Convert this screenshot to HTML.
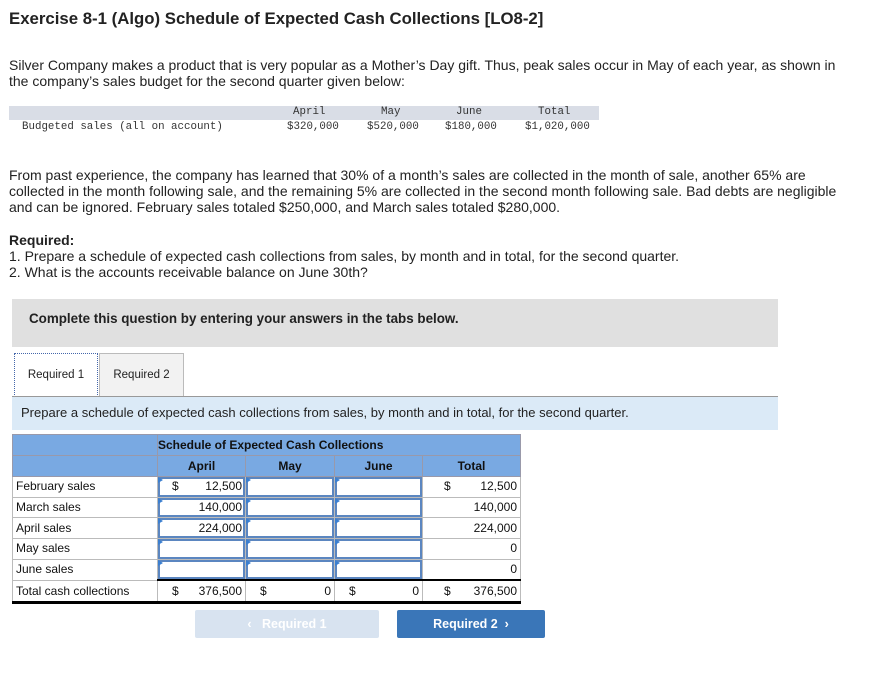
<!DOCTYPE html>
<html><head><meta charset="utf-8"><style>
body{margin:0;width:888px;height:691px;background:#fff;font-family:"Liberation Sans",sans-serif;color:#222;position:relative;overflow:hidden}
.a{position:absolute;white-space:nowrap}
.p{font-size:14px;line-height:16px}
.mono{font-family:"Liberation Mono",monospace;font-size:10.8px;color:#333}
table{border-collapse:collapse;position:absolute;left:12px;top:434px;width:508px;font-size:12px;color:#111;table-layout:fixed}
td{padding:0 3px;height:19.7px;line-height:19px;border:1px solid #bbb;overflow:hidden;white-space:nowrap}
.h td{background:#79a9e2;border-color:#99a;font-weight:bold;text-align:center;height:20px;line-height:20px}
.in{box-shadow:inset 0 0 0 2px #5b86c0;position:relative}
.in:before{content:"";position:absolute;left:0;top:0;border-left:5px solid #3b7fd0;border-top:3px solid transparent;border-bottom:3px solid transparent}
.r{text-align:right}
.tot td{border-top:2px solid #000;border-bottom:3px solid #000}
</style></head><body>
<div class="a" style="left:9px;top:9px;font-size:16.8px;font-weight:bold;color:#222">Exercise 8-1 (Algo) Schedule of Expected Cash Collections [LO8-2]</div>
<div class="a p" style="left:9px;top:57px">Silver Company makes a product that is very popular as a Mother’s Day gift. Thus, peak sales occur in May of each year, as shown in<br>the company’s sales budget for the second quarter given below:</div>
<div class="a" style="left:9px;top:106px;width:590px;height:14px;background:#d9dde6"></div>
<div class="a mono" style="left:293px;top:106px">April</div>
<div class="a mono" style="left:381px;top:106px">May</div>
<div class="a mono" style="left:456px;top:106px">June</div>
<div class="a mono" style="left:538px;top:106px">Total</div>
<div class="a mono" style="left:22px;top:121px">Budgeted sales (all on account)</div>
<div class="a mono" style="left:287px;top:121px">$320,000</div>
<div class="a mono" style="left:367px;top:121px">$520,000</div>
<div class="a mono" style="left:445px;top:121px">$180,000</div>
<div class="a mono" style="left:525px;top:121px">$1,020,000</div>
<div class="a p" style="left:9px;top:167px">From past experience, the company has learned that 30% of a month’s sales are collected in the month of sale, another 65% are<br>collected in the month following sale, and the remaining 5% are collected in the second month following sale. Bad debts are negligible<br>and can be ignored. February sales totaled $250,000, and March sales totaled $280,000.</div>
<div class="a p" style="left:9px;top:232px;font-weight:bold">Required:</div>
<div class="a p" style="left:9px;top:248px">1. Prepare a schedule of expected cash collections from sales, by month and in total, for the second quarter.<br>2. What is the accounts receivable balance on June 30th?</div>
<div class="a" style="left:12px;top:299px;width:766px;height:48px;background:#e0e0e0"></div>
<div class="a" style="left:29px;top:311px;font-size:13.4px;font-weight:bold;color:#222">Complete this question by entering your answers in the tabs below.</div>
<div class="a" style="left:14px;top:353px;width:82px;height:43px;border:1px dotted #46a;border-bottom:none;background:#fff;font-size:11.5px;text-align:center;line-height:43px">Required 1</div>
<div class="a" style="left:99px;top:353px;width:83px;height:42px;border:1px solid #bbb;background:#f2f2f2;font-size:11.5px;text-align:center;line-height:43px">Required 2</div>
<div class="a" style="left:12px;top:396px;width:766px;height:33px;background:#dbeaf7;border-top:1px solid #999"></div>
<div class="a" style="left:21px;top:405px;font-size:13px">Prepare a schedule of expected cash collections from sales, by month and in total, for the second quarter.</div>
<table>
<colgroup><col style="width:145px"><col style="width:88px"><col style="width:89px"><col style="width:88px"><col style="width:98px"></colgroup>
<tr class="h"><td></td><td colspan="4" style="text-align:left;padding-left:0;overflow:visible"><span>Schedule of Expected Cash Collections</span></td></tr>
<tr class="h"><td></td><td>April</td><td>May</td><td>June</td><td>Total</td></tr>
<tr><td>February sales</td><td class="in r"><span style="float:left;padding-left:11px">$</span>12,500</td><td class="in"></td><td class="in"></td><td class="r"><span style="float:left;padding-left:18px">$</span>12,500</td></tr>
<tr><td>March sales</td><td class="in r">140,000</td><td class="in"></td><td class="in"></td><td class="r">140,000</td></tr>
<tr><td>April sales</td><td class="in r">224,000</td><td class="in"></td><td class="in"></td><td class="r">224,000</td></tr>
<tr><td>May sales</td><td class="in"></td><td class="in"></td><td class="in"></td><td class="r">0</td></tr>
<tr><td>June sales</td><td class="in"></td><td class="in"></td><td class="in"></td><td class="r">0</td></tr>
<tr class="tot"><td style="border-top:1px solid #bbb">Total cash collections</td><td class="r"><span style="float:left;padding-left:11px">$</span>376,500</td><td class="r"><span style="float:left;padding-left:11px">$</span>0</td><td class="r"><span style="float:left;padding-left:11px">$</span>0</td><td class="r"><span style="float:left;padding-left:18px">$</span>376,500</td></tr>
</table>
<div class="a" style="left:195px;top:610px;width:184px;height:28px;background:#d8e3f0;border-radius:2px;color:#fff;font-size:12.5px;font-weight:bold;text-align:center;line-height:28px">‹&nbsp;&nbsp; Required 1</div>
<div class="a" style="left:397px;top:610px;width:148px;height:28px;background:#3a76b8;border-radius:2px;color:#fff;font-size:12.5px;font-weight:bold;text-align:center;line-height:28px">Required 2 &nbsp;›</div>
</body></html>
